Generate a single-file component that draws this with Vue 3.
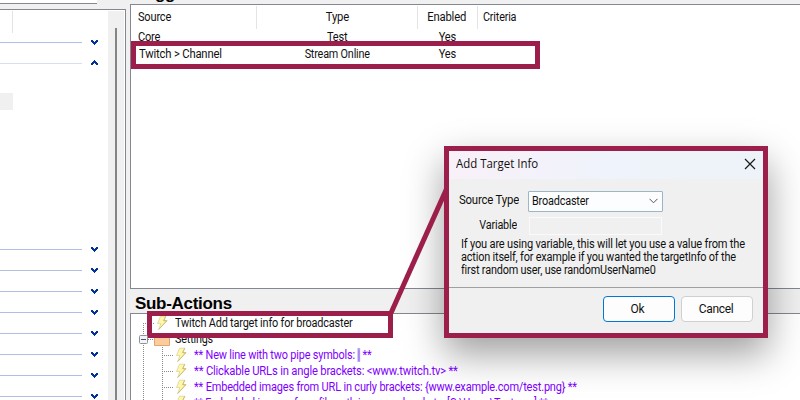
<script setup>
const sections = [
  { y: 42, open: false },
  { y: 63, open: true },
  ...Array.from({ length: 8 }, (_, i) => ({ y: 249 + i * 21, open: false })),
]
const children = [
  { text: '** Clickable URLs in angle brackets: <www.twitch.tv> **', cls: 'l2' },
  { text: '** Embedded images from URL in curly brackets: {www.example.com/test.png} **', cls: 'l3' },
  { text: '** Embedded images from file path in square brackets: [C:\\Users\\Test.png] **', cls: 'l4' },
]
</script>

<template>
  <svg class="defs" width="0" height="0">
    <symbol id="bolt" viewBox="0 0 12 16">
      <path d="M4.500 1.200h5.300L7.600 5.700h3.300L2.700 14.500l2.100-5.900H1.500z" fill="#fff8a8" stroke="#d8d2a0" stroke-width=".8" />
      <path d="M9.800 1.200L7.600 5.700h3.300L2.700 14.500" fill="none" stroke="#cdbb72" stroke-width="1" />
    </symbol>
  </svg>
  <main class="app">
    <aside class="side">
      <div class="filter"></div>
      <div class="groups">
        <div class="content">
          <i class="tick"></i>
          <i class="chip"></i>
          <div v-for="s in sections" :key="s.y" class="section" :class="{ open: s.open }" :style="{ top: s.y - 13 + 'px' }">
            <i class="rule"></i>
            <svg width="7" height="6" viewBox="0 0 7 6" shape-rendering="crispEdges">
              <path d="M0 1h2v1H0zM5 1h2v1H5zM0 2h3v1H0zM4 2h3v1H4zM1 3h5v1H1zM2 4h3v1H2zM3 5h1v1H3z" fill="#003399" />
            </svg>
          </div>
        </div>
        <div class="track"><i class="thumb"></i></div>
      </div>
    </aside>
    <section class="work">
      <h2 class="top">Triggers</h2>
      <div class="panel triggers">
        <div class="row head">
          <span class="src"><b class="w-source">Source</b></span>
          <span class="mid"><b class="w-enabled">Type</b></span>
          <span class="mid yes"><b class="w-enabled">Enabled</b></span>
          <span class="crit"><b class="w-criteria">Criteria</b></span>
        </div>
        <div class="row core"><span class="src"><b class="w-source">Core</b></span><span class="mid"><b class="w-source">Test</b></span><span class="mid yes"><b class="w-source">Yes</b></span></div>
        <div class="row twitch"><span class="src"><b class="w-channel">Twitch &gt; Channel</b></span><span class="mid"><b class="w-stream">Stream Online</b></span><span class="mid yes"><b class="w-source">Yes</b></span></div>
      </div>
      <h2 class="sub">Sub-Actions</h2>
      <div class="panel tree">
        <i class="dots v1"></i><i class="dots v2"></i>
        <div class="node first"><i class="dots h"></i><svg class="bolt"><use href="#bolt" /></svg><span class="w-first">Twitch Add target info for broadcaster</span></div>
        <div class="node folder-row">
          <svg class="minus" width="9" height="9"><rect x=".5" y=".5" width="8" height="8" rx="1" fill="#f5f5f5" stroke="#919191" /><path d="M2 4.5h5" stroke="#3f57a0" /></svg>
          <i class="dots h"></i>
          <svg class="folder" width="16" height="13"><path d="M.5 12.5V1.5h5l1 1h9v10z" fill="#ffcc99" stroke="#d9a878" /></svg>
          <span class="w-folder">Settings</span>
        </div>
        <div class="node child"><i class="dots h"></i><svg class="bolt"><use href="#bolt" /></svg><span class="l1">** New line with two pipe symbols: <mark>|</mark> **</span></div>
        <div v-for="c in children" :key="c.cls" class="node child"><i class="dots h"></i><svg class="bolt"><use href="#bolt" /></svg><span :class="c.cls">{{ c.text }}</span></div>
      </div>
    </section>

    <div class="callout c1"></div>
    <div class="callout c2"></div>

    <div class="dialog">
      <header>
        <span class="w-title">Add Target Info</span>
        <svg width="12" height="12"><path d="M1 1l10 10M11 1L1 11" stroke="#1a1a1a" stroke-width="1.2" /></svg>
      </header>
      <div class="form">
        <div class="field"><label class="w-st">Source Type</label><div class="select"><span class="w-bc">Broadcaster</span><svg width="9" height="6"><path d="M.5 .8l4 4 4-4" fill="none" stroke="#555" /></svg></div></div>
        <div class="field second"><label class="w-var">Variable</label><div class="input"></div></div>
        <p><span class="p1">If you are using variable, this will let you use a value from the</span><span class="p2">action itself, for example if you wanted the targetInfo of the</span><span class="p3">first random user, use randomUserName0</span></p>
      </div>
      <footer><button class="ok">Ok</button><button>Cancel</button></footer>
    </div>
    <svg class="link" width="800" height="400"><path d="M391 313L446.500 189" stroke="#9b1f4a" stroke-width="5" /></svg>
  </main>
</template>

<style>
body { margin: 0; overflow: hidden; }
</style>
<style scoped>
* { box-sizing: border-box; }
b { font-weight: 400; display: inline-block; }
i { display: block; }
.defs { position: absolute; }
.app { position: relative; width: 800px; height: 400px; overflow: hidden; background: #f0f0f0; display: flex; font: 12px/16px Roboto, "Liberation Sans", sans-serif; color: #111; white-space: pre; letter-spacing: -.2px; }
.side { width: 130px; height: 400px; }
.filter { width: 97px; height: 4px; background: #fff; border-bottom: 1px solid #828790; }
.groups { margin-top: 5px; width: 126px; height: 391px; background: #fff; border: solid #828790; border-width: 1px 1px 0 0; display: flex; }
.content { width: 108px; position: relative; }
.tick { width: 1px; height: 22px; margin: 1px 0 0 12px; background: #e3e3e3; }
.chip { width: 13px; height: 17px; margin-top: 60px; background: #f0f0f0; }
.section { position: absolute; left: 0; width: 98px; height: 6px; display: flex; align-items: center; justify-content: space-between; }
.rule { width: 82px; height: 1px; background: #b0bfe1; }
.section.open .rule { background: #d6dfee; }
.open svg { transform: scaleY(-1); }
.track { width: 16px; margin-top: 1px; background: #f0f0f0; }
.thumb { width: 2px; height: 380px; margin: 17px 0 0 7px; background: #858585; }
.work { flex: 1; min-width: 0; overflow: hidden; }
h2 { margin: 0; padding-left: 5px; font: bold 17px/24px "Liberation Sans", Arial, sans-serif; letter-spacing: -.3px; color: #000; }
.top { height: 4px; line-height: 20px; display: flex; align-items: flex-end; }
.panel { width: 680px; background: #fff; border: 1px solid #828790; }
.triggers { height: 285px; }
.row { display: grid; grid-template-columns: 126px 161px 60px 1fr; height: 17px; }
.src { padding-left: 7px; }
.mid { text-align: center; }
.yes { padding-right: 2px; }
.head { height: 23px; margin-top: 1px; line-height: 22px; }
.head > span { border-right: 1px solid #e4e4e4; }
.head > .crit { border: 0; padding-left: 5px; }
.twitch .src { padding-left: 8px; }
.sub { height: 24px; line-height: 29px; }
.tree { position: relative; height: 100px; padding-top: 1px; border-bottom: 0; }
.node { display: flex; align-items: center; height: 16px; }
.node > span { line-height: 17px; padding-top: 1px; transform-origin: 0 50%; }
.dots { flex: none; background: repeating-linear-gradient(90deg, #888 0 1px, transparent 1px 2px); height: 1px; }
.v1, .v2 { position: absolute; width: 1px; height: 78px; background: repeating-linear-gradient(#888 0 1px, transparent 1px 2px); }
.v1 { left: 12px; top: 9px; }
.v2 { left: 31px; top: 33px; height: 60px; }
.first .h { width: 12px; margin-left: 12px; }
.bolt { width: 12px; height: 16px; flex: none; }
.first .bolt { margin: 0 7px 0 1px; }
.minus { z-index: 1; margin-left: 8px; }
.folder-row .h { width: 6px; }
.folder { margin-right: 5px; }
.child { color: #8000ff; }
.child .h { width: 12px; margin-left: 31px; }
.child .bolt { margin: 0 7px 0 1px; }
mark { background: #b9a3fa; color: #9275ee; }
.callout { position: absolute; border: 5px solid #9b1f4a; }
.c1 { left: 131px; top: 41px; width: 409px; height: 28px; }
.c2 { left: 147px; top: 311px; width: 246px; height: 27px; }
.link { position: absolute; left: 0; top: 0; pointer-events: none; }
.dialog { position: absolute; left: 444px; top: 146px; width: 324px; height: 192px; border: 5px solid #9b1f4a; background: #f0f0f0; box-shadow: 0 16px 36px rgba(0,0,0,.38); }
header { height: 28px; padding: 0 7px 3px; display: flex; align-items: center; justify-content: space-between; background: linear-gradient(90deg, #f9f0f8, #eff3fb 50%, #edf3f8); font: 12px "Open Sans", sans-serif; letter-spacing: 0; }
.form { height: 108px; padding-top: 11px; }
.field { display: flex; align-items: center; height: 22px; }
label { width: 70px; margin-right: 9px; padding-bottom: 2px; text-align: right; }
.second { height: 19px; margin-top: 4px; }
.second label { width: 68px; margin-right: 12px; }
.select { width: 135px; height: 21px; padding: 0 4px 0 3px; border: 1px solid #9db5c8; background: #fbfdff; border-radius: 1px; display: flex; align-items: center; justify-content: space-between; }
.input { width: 133px; height: 18px; border: 1px solid #fafafa; }
p { margin: 3px 0 0 12px; line-height: 13px; display: flex; flex-direction: column; align-items: flex-start; }
footer { border-top: 1px solid #a0a0a0; height: 46px; padding: 8px 10px 0; display: flex; justify-content: flex-end; gap: 6px; }
button { width: 72px; height: 26px; padding: 0 3px 0 0; border: 1px solid #d0d0d0; border-radius: 4px; background: #fdfdfd; font: inherit; letter-spacing: inherit; color: inherit; }
button:last-child { padding-right: 2px; letter-spacing: -.35px; }
.ok { border-color: #0078d4; }

/* condensed label widths */
.w-source { transform: scaleX(.92); }
.w-channel { transform: scaleX(.94); }
.src b, .crit b { transform-origin: 0 50%; }
.w-stream { transform: scaleX(.9); }
.w-enabled { transform: scaleX(.94); }
.w-criteria { transform: scaleX(.9); }
.w-first, .l1 { transform: scaleX(.908); }
.w-folder { transform: scaleX(.9); }
.l2 { transform: scaleX(.936); }
.l3 { transform: scaleX(.916); }
.l4 { transform: scaleX(.894); }
.p1, .p2, .p3, .w-bc, .w-title { transform-origin: 0 50%; }
.p1 { transform: scaleX(.921); }
.p2 { transform: scaleX(.909); }
.p3 { transform: scaleX(.905); }
.w-bc { transform: scaleX(.905); }
.w-title { transform: scaleX(.953); }
.w-st, .w-var { transform-origin: 100% 50%; }
.w-st { transform: scaleX(.95); }
.w-var { transform: scaleX(.9); }
</style>
